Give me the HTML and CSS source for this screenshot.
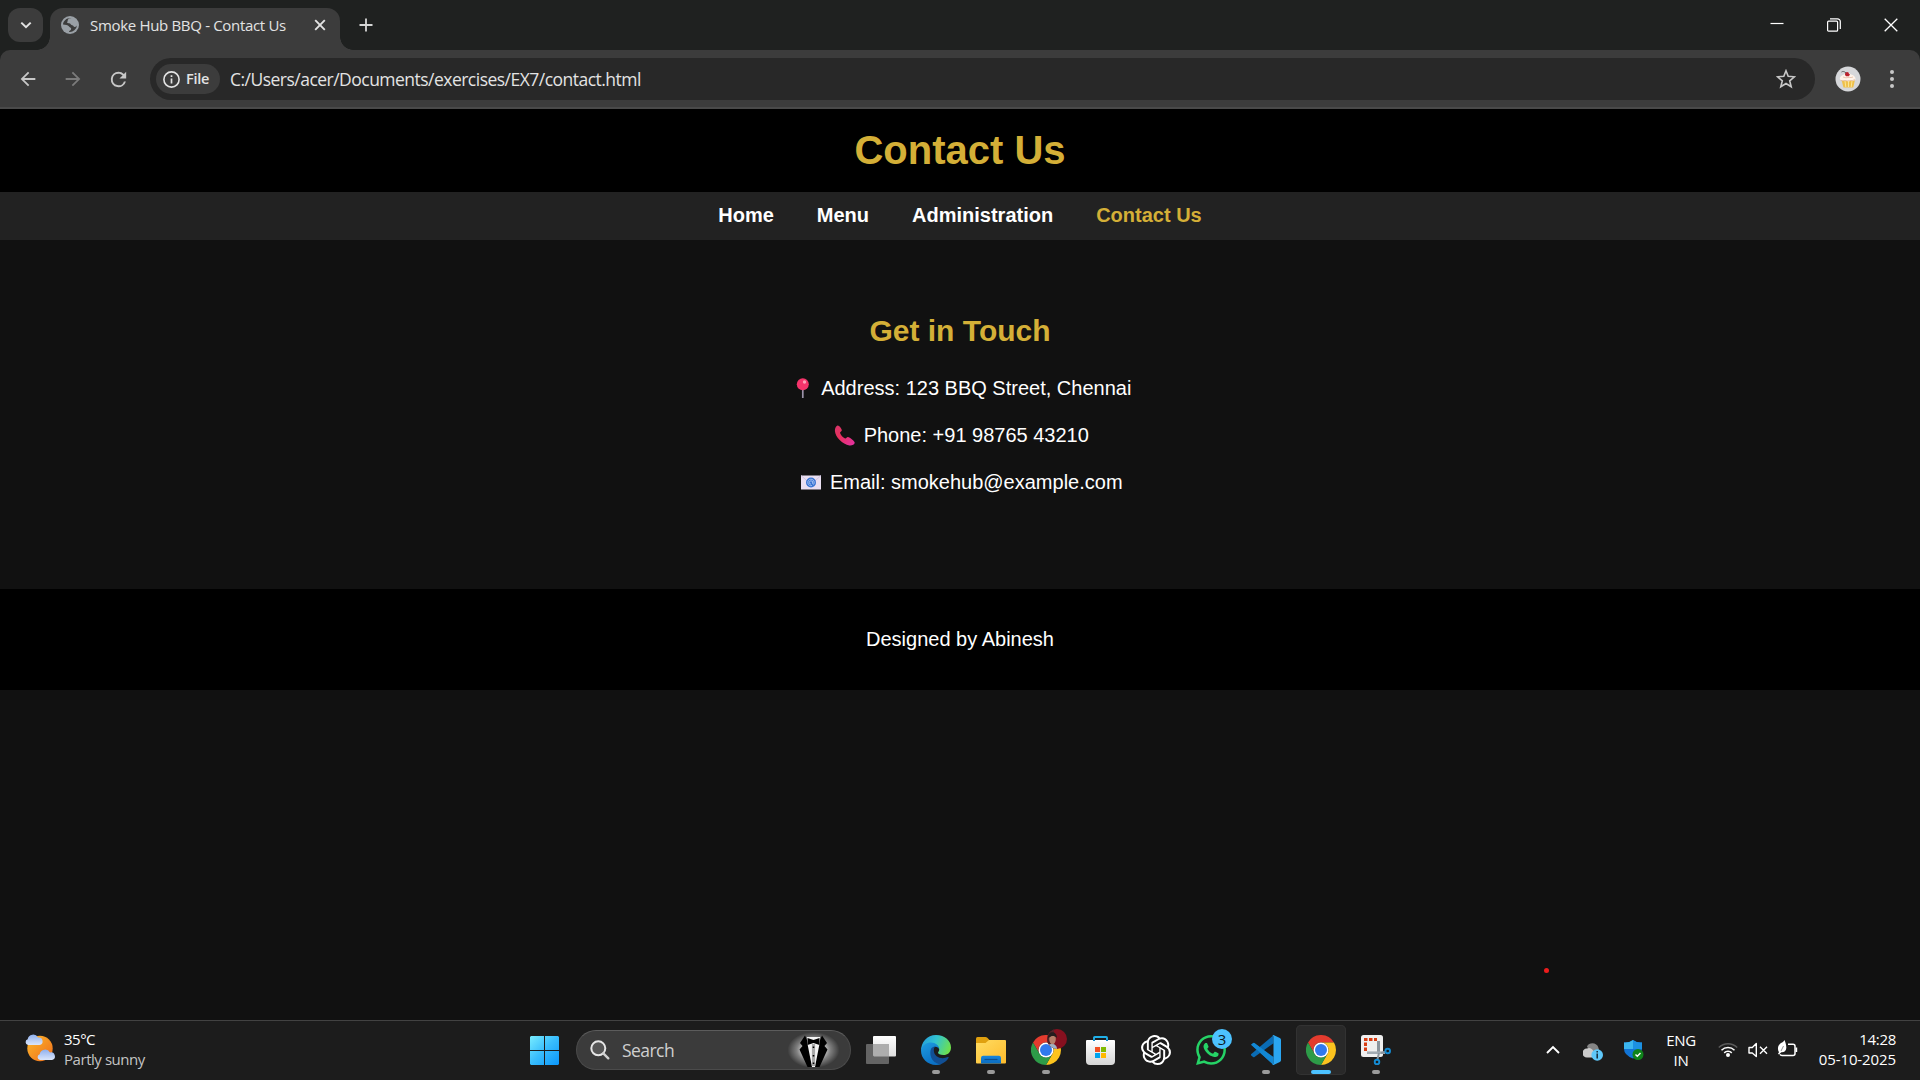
FILE: index.html
```html
<!DOCTYPE html>
<html lang="en">
<head>
<meta charset="utf-8">
<title>Smoke Hub BBQ - Contact Us</title>
<link rel="stylesheet" href="styles.css">
</head>
<body>
<div class="desktop">

  <div class="tabstrip">
    <div class="tab-search"><svg width="12" height="12" viewBox="0 0 12 12"><path d="M1.3 3.6 6 8.2l4.700-4.600" fill="none" stroke="#e3e3e3" stroke-width="2"/></svg></div>
    <div class="tab">
      <svg class="favicon" width="18" height="18" viewBox="0 0 18 18"><circle cx="9" cy="9" r="9" fill="#9aa0a6"/><path d="M10.500 2C7 2.300 6.500 4 6.800 5.200 5.500 5.500 6 7.500 8 7.300c2 0 1.500 1.800 3 2 1.800.2 1.400 1.700 2.800 1.700 1.200 0 1.500-.8 2.200-1.500A7.200 7.200 0 0 1 8 15.900c0-1.600 2.300-1.500 2.200-3.200-.1-1.500-1.700-1.300-2.400-2.500C7 9 4.500 8.900 2 8.600 2.200 4.500 6 1.500 10.500 2Z" fill="#3c3c3c"/></svg>
      <span class="tab-title">Smoke Hub BBQ - Contact Us</span>
      <svg class="tab-close" width="12" height="12" viewBox="0 0 12 12"><path d="m1.200 1.200 9.600 9.600m0-9.600-9.600 9.600" stroke="#e3e3e3" stroke-width="1.900"/></svg>
    </div>
    <svg class="new-tab" width="14" height="14" viewBox="0 0 14 14"><path d="M7 .5v13M.5 7h13" stroke="#d5d6d6" stroke-width="1.800"/></svg>
    <div class="window-buttons">
      <svg width="14" height="14" viewBox="0 0 14 14"><path d="M.5 5.500h13" stroke="#fff" stroke-width="1.200"/></svg>
      <svg width="14" height="14" viewBox="0 0 14 14"><rect x=".6" y="3.200" width="10" height="10" rx="1" fill="none" stroke="#fff" stroke-width="1.200"/><path d="M3 .8h7.500a2.800 2.800 0 0 1 2.800 2.800V11" fill="none" stroke="#fff" stroke-width="1.200"/></svg>
      <svg width="14" height="14" viewBox="0 0 14 14"><path d="m.7.7 12.600 12.600m0-12.600L.7 13.300" stroke="#fff" stroke-width="1.300"/></svg>
    </div>
  </div>

  <div class="toolbar-back"><div class="toolbar">
    <svg class="nav-icon" width="22" height="22" viewBox="0 0 24 24"><path d="M20 11H7.830l5.590-5.590L12 4l-8 8 8 8 1.410-1.410L7.830 13H20z" fill="#c7c7c7"/></svg>
    <svg class="nav-icon" width="22" height="22" viewBox="0 0 24 24"><path d="m12 4-1.410 1.410L16.170 11H4v2h12.170l-5.580 5.590L12 20l8-8z" fill="#7b7b7b"/></svg>
    <svg class="nav-icon" width="23" height="23" viewBox="0 0 24 24"><path d="M17.650 6.350A7.958 7.958 0 0 0 12 4a8 8 0 1 0 7.730 10h-2.080A6 6 0 1 1 12 6c1.660 0 3.140.690 4.220 1.780L13 11h7V4z" fill="#c7c7c7"/></svg>
    <div class="omnibox">
      <div class="chip">
        <svg width="17" height="17" viewBox="0 0 17 17"><circle cx="8.500" cy="8.500" r="7.600" fill="none" stroke="#e3e3e3" stroke-width="1.600"/><path d="M8.500 7.500v5M8.500 4.300v1.800" stroke="#e3e3e3" stroke-width="1.700"/></svg>
        <span class="chip-text">File</span>
      </div>
      <span class="url">C:/Users/acer/Documents/exercises/EX7/contact.html</span>
      <svg class="star" width="20" height="20" viewBox="0 0 20 20"><path d="m10 1.800 2.200 5.500 6.200.5-4.700 4 1.500 6-5.200-3.300-5.200 3.300 1.500-6-4.700-4 6.200-.5z" fill="none" stroke="#c7c7c7" stroke-width="1.600"/></svg>
    </div>
    <svg class="profile" width="26" height="26" viewBox="0 0 26 26"><circle cx="13" cy="13" r="12.500" fill="#d6d7da"/><path d="M6.500 14h13.500l-1.800 7.600H8.500z" fill="#efc04a"/><path d="m10 15 .8 6m2.700-6v6m3.500-6-.8 6" stroke="#fae596"/><path d="M5 13.500c-.8-2.500 2-4.500 4-5 2-1.500 6-1.500 7 0 3 .5 5 3 4.500 5-1.500 2-3 .8-4.500 1.300-2 .7-3 .7-4 .2-1.500-.7-5 .5-7-1.500" fill="#fff3ea"/><path d="M5.500 14.200q2 1.200 4.500.2 2 1 4.500.1 3 .5 5.500-.9M8 11q3 1.500 6 .3 2 .7 4-.3" fill="none" stroke="#dfb59a" stroke-width=".7"/><path d="M10 8h5l-1 2.200h-3z" fill="#c42b35"/><circle cx="12" cy="8" r="2" fill="#b9202c"/><path d="M11 7C9 5 7.500 5.300 6.500 6" fill="none" stroke="#5f6060" stroke-width="1"/></svg>
    <svg class="kebab" width="6" height="20" viewBox="0 0 6 20"><g fill="#c7c7c7"><circle cx="3" cy="3" r="2"/><circle cx="3" cy="10" r="2"/><circle cx="3" cy="17" r="2"/></g></svg>
  </div></div>

  <div class="page">
    <header class="site-header"><h1>Contact Us</h1></header>
    <nav class="site-nav"><a>Home</a><a>Menu</a><a>Administration</a><a class="active">Contact Us</a></nav>
    <main class="contact">
      <h2>Get in Touch</h2>
      <p><svg class="emoji" width="27" height="22" viewBox="0 0 27 22"><path d="M13.800 10v10" stroke="#9a92a8" stroke-width="1.700"/><circle cx="13.800" cy="6.300" r="6" fill="#f5346b"/><circle cx="15.500" cy="4" r="1.700" fill="#ffa0b8"/></svg><span>Address: 123 BBQ Street, Chennai</span></p>
      <p><svg class="emoji" width="27" height="22" viewBox="0 0 27 22"><defs><linearGradient id="phone" x1="0" y1="0" x2="1" y2="1"><stop offset="0" stop-color="#d5356b"/><stop offset=".4" stop-color="#e8305c"/><stop offset="1" stop-color="#e332a6"/></linearGradient></defs><path d="M6.500.6c1.500-.4 4.800 3.800 4.300 5-.4 1-1.900 1.300-1.700 2.400.5 2 2.900 4.700 5 5.500 1 .3 1.700-1.600 2.800-1.500 1.900.2 6.900 4.300 6.800 5.700-.2 2.100-3.100 3-5.300 2.700C11.500 19.500 4.300 12 3.900 6 3.800 3.500 4.900 1.100 6.500.6Z" fill="url(#phone)"/></svg><span>Phone: +91 98765 43210</span></p>
      <p><svg class="emoji" width="27" height="22" viewBox="0 0 27 22"><rect x="4" y="3.500" width="20" height="14" fill="#e9dff1"/><path d="m4 3.500 8 7m12-7-8 7" stroke="#d3c4e4"/><circle cx="14" cy="10.500" r="5" fill="#3b76d4"/><path d="M15.700 10.500a1.700 1.700 0 1 0-1.700 1.700m1.700-2.700v2c0 1.500 1.700.8 1.500-1a3.200 3.200 0 1 0-2.200 3" fill="none" stroke="#b5cdf5" stroke-width=".8"/></svg><span>Email: smokehub@example.com</span></p>
    </main>
    <footer class="site-footer">Designed by Abinesh</footer>
    <div class="pointer-dot"></div>
  </div>

  <div class="taskbar">
    <div class="weather">
      <svg width="30" height="30" viewBox="0 0 30 30"><defs><linearGradient id="sun" x1="0" y1="0" x2="1" y2="1"><stop offset="0" stop-color="#fcb92c"/><stop offset="1" stop-color="#ef6c1a"/></linearGradient><linearGradient id="cloud" x1="0" y1="0" x2="0" y2="1"><stop offset="0" stop-color="#8fb0ee"/><stop offset="1" stop-color="#dbe6fb"/></linearGradient></defs><circle cx="15" cy="15.500" r="12.700" fill="url(#sun)"/><path d="M3 12a3 3 0 0 1-.3-5.800A5.500 5.500 0 0 1 13 4.500 3.800 3.800 0 0 1 14.500 12Z" fill="url(#cloud)"/><path d="M15 27a3 3 0 0 1-.3-5.800A5.500 5.500 0 0 1 25 19.500a3.800 3.800 0 0 1 2 7.500Z" fill="url(#cloud)"/></svg>
      <div class="weather-text"><div class="temp">35°C</div><div class="cond">Partly sunny</div></div>
    </div>

    <div class="apps">
      <div class="app"><svg width="30" height="30" viewBox="0 0 30 30"><defs><linearGradient id="win" gradientUnits="userSpaceOnUse" x1="0" y1="0" x2="30" y2="30"><stop offset="0" stop-color="#7df0ff"/><stop offset=".5" stop-color="#39bdfc"/><stop offset="1" stop-color="#0a96fb"/></linearGradient></defs><path d="M2 1H15v14H1V2zM16 1h13l1 1v13H16zM1 16h14v14H2l-1-1zM16 16h14v13l-1 1H16z" fill="url(#win)"/></svg></div>
      <div class="search">
        <svg width="20" height="20" viewBox="0 0 20 20"><circle cx="8.300" cy="8.300" r="7" fill="#565656" stroke="#e6e6e6" stroke-width="2"/><path d="m13.300 13.300 5 5" stroke="#d0d0d0" stroke-width="2.400" stroke-linecap="round"/></svg>
        <span class="search-text">Search</span>
        <svg class="tuxedo" width="60" height="38" viewBox="0 0 60 38"><defs><radialGradient id="glow"><stop offset=".3" stop-color="#fff" stop-opacity=".9"/><stop offset=".65" stop-color="#fff" stop-opacity=".35"/><stop offset="1" stop-color="#fff" stop-opacity="0"/></radialGradient></defs><ellipse cx="30.500" cy="19" rx="26" ry="18" fill="url(#glow)"/><path d="M24 6h13l-1 30H25z" fill="#f4f4f4"/><path d="M22 4.500 17 12l2.500 3-3 3.500L24.500 36H29L24.700 14l-.7-5zM39 4.500l5 7.500-2.500 3 3 3.500L36.500 36H32l4.300-22 .7-5z" fill="#000"/><path d="m24.500 7 6 2 6-2v7l-6-2-6 2z" fill="#000"/><path d="M30.500 13v22" stroke="#a8a8a8" stroke-width="3.200"/><path d="M30.500 15.500v1.500m0 7v1.500m0 6V33" stroke="#000" stroke-width="1.600"/></svg>
      </div>
      <div class="app"><svg width="30" height="30" viewBox="0 0 30 30"><defs><linearGradient id="tv" x1="0" y1="0" x2="0" y2="1"><stop offset="0" stop-color="#fff"/><stop offset="1" stop-color="#dedede"/></linearGradient></defs><rect x="7" y="1" width="23" height="20.500" rx="1" fill="url(#tv)"/><rect x="0" y="9" width="23" height="20" rx="1" fill="#646464"/><path d="M7 9h16v12.500H8l-1-1z" fill="#adadad"/></svg></div>
      <div class="app running"><svg width="30" height="30" viewBox="0 0 30 30"><defs><linearGradient id="eg" x1="0" y1=".3" x2="1" y2=".6"><stop offset="0" stop-color="#249ddd"/><stop offset=".45" stop-color="#32c4cf"/><stop offset="1" stop-color="#6fe04a"/></linearGradient><linearGradient id="eb" x1="0" y1="0" x2=".5" y2="1"><stop offset="0" stop-color="#1e9ce0"/><stop offset="1" stop-color="#0b70c4"/></linearGradient></defs><path d="M0 16C0 7 6 0 15 0c9 0 15 6 15 12.500 0 5-3.500 7.500-7.500 7.500-3.500 0-5.500-1.200-5.500-2.300 0-.8 1.200-1.200 1.200-3.200 0-3-3-5.500-7-5.500C6 9 2 11.500 0 16Z" fill="url(#eg)"/><path d="M0 15.500C1 10 5.500 7.500 10 7.500c4.500 0 8.200 3 8.200 6.800-.6-1.800-2.300-2.800-4.200-2.600-3 .5-4.500 4-3.500 8 1.200 5 6 9 10.500 9A15 15 0 0 1 15 30C6.500 30 0 23.500 0 15.500Z" fill="url(#eb)"/><path d="M10.200 13.500C8 18 9.500 27.500 19 29.400c4-1 7-3.500 8.600-6.600.3-.6-.2-1-.8-.7-5.300 2.500-14 .8-14-7.100 0-1 .4-2.300 1.200-3.200-1.700 0-3 .5-3.800 1.700Z" fill="#114f94"/></svg></div>
      <div class="app running"><svg width="30" height="30" viewBox="0 0 30 30"><defs><linearGradient id="fo" x1="0" y1="0" x2="1" y2="1"><stop offset="0" stop-color="#ffdc62"/><stop offset="1" stop-color="#fdbb2c"/></linearGradient><linearGradient id="fb" x1="0" y1="0" x2="0" y2="1"><stop offset="0" stop-color="#1585dd"/><stop offset="1" stop-color="#0b6cc0"/></linearGradient></defs><path d="M0 3.500Q0 2 1.500 2h8q1 0 1.800.8L14 5.500V9H0z" fill="#e0a00f"/><path d="M0 8h9.500l3.500-3h16q1 0 1 1v21.500q0 1-1 1H1q-1 0-1-1z" fill="url(#fo)"/><path d="M5 28.500V23q0-2.200 2.200-2.200h15.600q2.200 0 2.200 2.200v5.500z" fill="url(#fb)"/><path d="M8.500 24.500h13" stroke="#0b4f91" stroke-width="1.200"/></svg></div>
      <div class="app running"><svg width="30" height="30" viewBox="0 0 48 48"><path d="M24 12h20.780A24 24 0 0 0 3.200 12l10.400 18A12 12 0 0 1 24 12" fill="#e33b2e"/><path d="M34.400 30 24 48a24 24 0 0 0 20.780-36H24a12 12 0 0 1 10.400 18" fill="#fcc31e"/><path d="M13.600 30 3.200 12A24 24 0 0 0 24 48l10.400-18a12 12 0 0 1-20.800 0" fill="#2d9b48"/><circle cx="24" cy="24" r="12" fill="#fff"/><circle cx="24" cy="24" r="9.600" fill="#3079ee"/></svg>
        <svg class="avatar" width="20" height="20" viewBox="0 0 20 20"><defs><clipPath id="av"><circle cx="10" cy="10" r="10"/></clipPath></defs><g clip-path="url(#av)"><rect width="20" height="20" fill="#86101f"/><path d="M0 0h7v20H0z" fill="#53242a"/><path d="M0 20c0-4 2-5 5-5s5 2 5 5z" fill="#9fb0c0"/><ellipse cx="5.500" cy="10" rx="3.300" ry="5.300" fill="#b5806a"/><path d="M1 9c0-8 9-7 9 0-2-2-5-2.500-6-1.500z" fill="#241c1d"/></g></svg></div>
      <div class="app"><svg width="30" height="30" viewBox="0 0 30 30"><defs><linearGradient id="st" x1="0" y1="0" x2="0" y2="1"><stop offset="0" stop-color="#fff"/><stop offset="1" stop-color="#d5d5d5"/></linearGradient></defs><path d="M8 6.500V2.800Q8 2 8.800 2h11.400q.8 0 .8.800v3.700" fill="none" stroke="#20b0e8" stroke-width="1.900"/><path d="M0 6Q0 5 1 5h27q1 0 1 1v20q0 4-4 4H4q-4 0-4-4z" fill="url(#st)"/><path d="M8 4.500V6m13-1.500V6" stroke="#1489c8" stroke-width="2"/><path d="M9 12h5v5H9z" fill="#f25022"/><path d="M15 12h5v5h-5z" fill="#7fba00"/><path d="M9 18h5v5H9z" fill="#00a4ef"/><path d="M15 18h5v5h-5z" fill="#ffb900"/></svg></div>
      <div class="app"><svg width="30" height="30" viewBox="0 0 24 24"><path fill="#fff" d="M22.282 9.821a5.985 5.985 0 0 0-.516-4.911 6.046 6.046 0 0 0-6.510-2.900A6.065 6.065 0 0 0 4.981 4.182a5.985 5.985 0 0 0-3.998 2.900 6.046 6.046 0 0 0 .743 7.097 5.980 5.980 0 0 0 .511 4.911 6.051 6.051 0 0 0 6.515 2.900A5.985 5.985 0 0 0 13.260 24a6.056 6.056 0 0 0 5.772-4.206 5.989 5.989 0 0 0 3.998-2.900 6.056 6.056 0 0 0-.748-7.073zM13.260 22.430a4.476 4.476 0 0 1-2.876-1.041l.142-.080 4.778-2.758a.795.795 0 0 0 .393-.681v-6.737l2.020 1.169a.071.071 0 0 1 .038.052v5.583a4.504 4.504 0 0 1-4.495 4.494zM3.599 18.304a4.471 4.471 0 0 1-.535-3.014l.142.085 4.783 2.758a.771.771 0 0 0 .781 0l5.843-3.369v2.332a.080.080 0 0 1-.033.062L9.740 19.950a4.499 4.499 0 0 1-6.141-1.646zM2.341 7.896a4.485 4.485 0 0 1 2.366-1.973V11.600a.766.766 0 0 0 .388.677l5.814 3.354-2.020 1.169a.076.076 0 0 1-.071 0l-4.830-2.787A4.504 4.504 0 0 1 2.341 7.872zm16.596 3.856L13.104 8.364 15.119 7.200a.076.076 0 0 1 .071 0l4.830 2.791a4.494 4.494 0 0 1-.677 8.104v-5.677a.790.790 0 0 0-.407-.667zm2.011-3.023l-.142-.085-4.774-2.782a.776.776 0 0 0-.785 0L9.409 9.230V6.897a.066.066 0 0 1 .028-.062l4.830-2.787a4.499 4.499 0 0 1 6.680 4.660zM8.307 12.863l-2.020-1.164a.080.080 0 0 1-.038-.057V6.074a4.499 4.499 0 0 1 7.376-3.454l-.142.081L8.704 5.459a.795.795 0 0 0-.393.681zm1.098-2.365l2.602-1.500 2.607 1.500v2.999l-2.597 1.500-2.607-1.500Z"/></svg></div>
      <div class="app"><svg width="30" height="30" viewBox="0 0 24 24"><path fill="#25d366" d="M17.472 14.382c-.297-.149-1.758-.867-2.030-.967-.273-.099-.471-.148-.670.150-.197.297-.767.966-.940 1.164-.173.199-.347.223-.644.075-.297-.150-1.255-.463-2.390-1.475-.883-.788-1.480-1.761-1.653-2.059-.173-.297-.018-.458.130-.606.134-.133.298-.347.446-.520.149-.174.198-.298.298-.497.099-.198.050-.371-.025-.520-.075-.149-.669-1.612-.916-2.207-.242-.579-.487-.500-.669-.510-.173-.008-.371-.010-.570-.010-.198 0-.520.074-.792.372-.272.297-1.040 1.016-1.040 2.479 0 1.462 1.065 2.875 1.213 3.074.149.198 2.096 3.200 5.077 4.487.709.306 1.262.489 1.694.625.712.227 1.360.195 1.871.118.571-.085 1.758-.719 2.006-1.413.248-.694.248-1.289.173-1.413-.074-.124-.272-.198-.570-.347m-5.421 7.403h-.004a9.870 9.870 0 0 1-5.031-1.378l-.361-.214-3.741.982.998-3.648-.235-.374a9.860 9.860 0 0 1-1.510-5.260c.001-5.450 4.436-9.884 9.888-9.884 2.640 0 5.122 1.030 6.988 2.898a9.825 9.825 0 0 1 2.893 6.994c-.003 5.450-4.437 9.884-9.885 9.884m8.413-18.297A11.815 11.815 0 0 0 12.050 0C5.495 0 .160 5.335.157 11.892c0 2.096.547 4.142 1.588 5.945L.057 24l6.305-1.654a11.882 11.882 0 0 0 5.683 1.448h.005c6.554 0 11.890-5.335 11.893-11.893a11.821 11.821 0 0 0-3.480-8.413Z"/></svg><span class="badge">3</span></div>
      <div class="app running"><svg width="30" height="30" viewBox="0 0 30 30"><path d="M0 9.800 2 8.400q.8-.5 1.500 0L22 22.500v7z" fill="#1484cf"/><path d="M22.500.2v8L3.500 22q-.7.500-1.400 0L.3 20.500q-.8-.8 0-1.500z" fill="#0a6cb5"/><path d="m.3 9.500 1.800-1.600q.7-.5 1.400 0L22.500 22v7.800z" fill="#1287d3"/><path d="m22.500 0 6.300 3q1.200.6 1.200 1.800v20.400q0 1.200-1.200 1.800l-6.300 3q-.8 0-1.500-.7.900.3 1.500-.8v-27Q22 .3 21 .7q.7-.7 1.500-.7Z" fill="#2aa6f2"/></svg></div>
      <div class="app active-app running"><svg width="30" height="30" viewBox="0 0 48 48"><path d="M24 12h20.780A24 24 0 0 0 3.200 12l10.400 18A12 12 0 0 1 24 12" fill="#e33b2e"/><path d="M34.400 30 24 48a24 24 0 0 0 20.780-36H24a12 12 0 0 1 10.400 18" fill="#fcc31e"/><path d="M13.600 30 3.200 12A24 24 0 0 0 24 48l10.400-18a12 12 0 0 1-20.800 0" fill="#2d9b48"/><circle cx="24" cy="24" r="12" fill="#fff"/><circle cx="24" cy="24" r="9.600" fill="#3079ee"/></svg></div>
      <div class="app running"><svg width="30" height="30" viewBox="0 0 30 30"><rect width="22" height="22" rx="2.500" fill="#efefef"/><path d="M4.500 16V4.500H16" fill="none" stroke="#d83b10" stroke-width="3" stroke-dasharray="3.500 1.500"/><path d="M17.500 6v13" stroke="#8b949c" stroke-width="3"/><path d="M6 17.700h18" stroke="#a3abb2" stroke-width="2.600"/><path d="m18 18-1.500 6M20 18l4-1" stroke="#8b949c" stroke-width="2"/><circle cx="16" cy="27" r="2.300" fill="none" stroke="#148cd4" stroke-width="1.900"/><circle cx="26.700" cy="16" r="2.300" fill="none" stroke="#148cd4" stroke-width="1.900"/></svg></div>
    </div>

    <div class="tray">
      <svg class="t-chevron" width="14" height="10" viewBox="0 0 14 10"><path d="m1 8 6-6 6 6" fill="none" stroke="#fff" stroke-width="1.900"/></svg>
      <svg class="t-cloud" width="20" height="20" viewBox="0 0 20 20"><path d="M4 5.500C6 1 14 1 15.500 7l1.500 5-9 1z" fill="#858585"/><path d="M4 16.500a4.500 4.500 0 0 1-.2-9C8 5.500 10 9 11 11l3 5.500z" fill="#cbcbcb"/><circle cx="14.200" cy="14" r="5.800" fill="#5fc8fa"/><path d="M14.200 12.500v5M14.200 10v1.500" stroke="#162c3a" stroke-width="1.500"/></svg>
      <svg class="t-shield" width="20" height="20" viewBox="0 0 20 20"><path d="M9 0q4 3 9 2.500V9q0 6-9 9.500Q0 15 0 9V2.500Q5 3 9 0Z" fill="#1274d5"/><path d="M9 0v9H0V2.500Q5 3 9 0Z" fill="#3bb6ef"/><path d="M9 0v9h9V2.500Q13 3 9 0Z" fill="#1c91e2"/><circle cx="14" cy="14.500" r="5.500" fill="#0f831a"/><path d="m11.500 14.500 1.800 1.800 3.200-3.300" fill="none" stroke="#fff" stroke-width="1.400"/></svg>
      <div class="lang"><div>ENG</div><div>IN</div></div>
      <svg class="t-wifi" width="20" height="16" viewBox="0 0 20 16"><g fill="none" stroke-width="1.500"><path d="M.8 5.500a13 13 0 0 1 18.400 0" stroke="#5b5b5b"/><path d="M3.500 8.200a9.200 9.200 0 0 1 13 0M6.200 10.900a5.400 5.400 0 0 1 7.600 0" stroke="#fff"/></g><circle cx="10" cy="13" r="2" fill="#fff"/></svg>
      <svg class="t-volume" width="20" height="16" viewBox="0 0 20 16"><path d="M1 5.500h3.300L8.300 1.500v13l-4-3.500H1z" fill="none" stroke="#fff" stroke-width="1.400" stroke-linejoin="round"/><path d="m12 4.700 7 7m0-7-7 7" stroke="#fff" stroke-width="1.400"/></svg>
      <svg class="t-battery" width="21" height="18" viewBox="0 0 21 18"><path d="M11 4.200h5q2 0 2 2v7.200q0 2-2 2H5q-1.500 0-2-1" fill="none" stroke="#fff" stroke-width="1.500"/><path d="M18.500 7.500h1.700V12h-1.700z" fill="#fff"/><path d="M7.500 0C8 1.500 9.500 4.500 9.300 8c0 3-2.500 4.500-5 4.200L2 14.500l-1-.8 1-1.500C-.5 8 2 4 4.500 2.800 6 2 7 1.300 7.500 0Z" fill="#fff"/><path d="M6.500 6 4 11" stroke="#777" stroke-width=".8"/></svg>
      <div class="clock"><div class="time">14:28</div><div class="date">05-10-2025</div></div>
    </div>
  </div>
</div>
</body>
</html>
```
FILE: styles.css
```css
* { box-sizing: border-box; }
body { margin: 0; background: #111; }
svg { display: block; flex: none; }

.desktop {
  display: flex;
  flex-direction: column;
  width: 1920px;
  height: 1080px;
  overflow: hidden;
  font-family: "Open Sans", "Noto Sans", sans-serif;
  white-space: nowrap;
}

/* Browser tab strip */
.tabstrip {
  display: flex;
  align-items: flex-start;
  flex: none;
  height: 50px;
  padding: 8px 0 0 8px;
  background: #1f2120;
}
.tab-search {
  display: grid;
  place-items: center;
  width: 35px;
  height: 34px;
  border-radius: 12px;
  background: #3c3c3c;
}
.tab {
  position: relative;
  display: flex;
  align-items: center;
  width: 290px;
  height: 42px;
  margin-left: 7px;
  padding: 0 14px 8px 11px;
  border-radius: 13px 13px 0 0;
  background: #3c3c3c;
}
.tab::before, .tab::after {
  content: "";
  position: absolute;
  bottom: 0;
  width: 13px;
  height: 13px;
}
.tab::before { left: -13px; background: radial-gradient(circle at 0 0, transparent 12.5px, #3c3c3c 13px); }
.tab::after { right: -13px; background: radial-gradient(circle at 100% 0, transparent 12.5px, #3c3c3c 13px); }
.tab-title { flex: 1; margin: 0 0 1px 11px; font-size: 15px; line-height: 20px; letter-spacing: -0.32px; color: #e3e3e3; }
.new-tab { margin: 10px 0 0 19px; }
.window-buttons { display: flex; gap: 43px; margin: 10px 22px 0 auto; }

/* Browser toolbar */
.toolbar-back { flex: none; background: #1f2120; }
.toolbar {
  display: flex;
  align-items: center;
  height: 59px;
  padding: 1px 25px 0 16.5px;
  border-bottom: 2px solid #4a4a4a;
  border-radius: 10px 10px 0 0;
  background: #3c3c3c;
}
.nav-icon { margin-right: 23px; }
.omnibox {
  display: flex;
  align-items: center;
  width: 1665px;
  height: 42px;
  margin-left: -2.5px;
  padding: 0 19px 0 6px;
  border-radius: 21px;
  background: #282828;
}
.chip {
  display: flex;
  align-items: center;
  gap: 6px;
  width: 64px;
  height: 30px;
  padding-left: 7px;
  border-radius: 15px;
  background: #3c3c3c;
}
.chip-text { margin-bottom: 1px; font-size: 14.5px; font-weight: 600; color: #e3e3e3; letter-spacing: -0.3px; }
.url { margin: 0 0 1px 10px; font-size: 17.5px; color: #e3e3e3; letter-spacing: -0.52px; }
.star { margin-left: auto; }
.profile { margin-left: 20px; }
.kebab { margin-left: auto; }

/* Contact page */
.page {
  position: relative;
  flex: 1;
  min-height: 0;
  background: #111;
  color: #fff;
  font: 20px/23px "Liberation Sans", Arial, sans-serif;
  text-align: center;
}
.site-header { height: 83px; padding-top: 18px; background: #000; }
.site-header h1 { margin: 0; font-size: 40px; line-height: 46px; color: #d4af37; }
.site-nav {
  display: flex;
  justify-content: center;
  gap: 43px;
  height: 48px;
  padding-top: 12px;
  background: #222;
  font-weight: bold;
}
.site-nav .active { color: #d4af37; }
.contact { height: 349px; padding-top: 73px; }
.contact h2 { margin: 0 0 27px; font-size: 30px; line-height: 35px; color: #d4af37; }
.contact p { display: flex; justify-content: center; align-items: center; gap: 5.5px; height: 27px; margin: 0 0 20px; }
.site-footer { height: 101px; padding-top: 39px; background: #000; }
.pointer-dot {
  position: absolute;
  left: 1544px;
  top: 858.5px;
  width: 5px;
  height: 5px;
  border-radius: 50%;
  background: #ed1c1c;
}

/* Taskbar */
.taskbar {
  display: flex;
  flex: none;
  height: 60px;
  border-top: 1px solid #424242;
  background: #1c1c1c;
  color: #fff;
  font-size: 15px;
  line-height: 20px;
}
.weather { display: flex; width: 519px; padding: 12px 0 0 25px; }
.weather-text { margin: -4px 0 0 9px; }
.temp { letter-spacing: -0.5px; }
.cond { color: #c4c4c4; letter-spacing: -0.45px; }
.apps { display: flex; gap: 5px; padding-top: 4px; }
.app {
  position: relative;
  display: grid;
  place-items: center;
  width: 50px;
  height: 50px;
  border-radius: 5px;
}
.running::after {
  content: "";
  position: absolute;
  left: 21px;
  top: 45px;
  width: 8px;
  height: 4px;
  border-radius: 2px;
  background: #9a9a9a;
}
.active-app { background: #292929; box-shadow: inset 0 0 0 1px #323232; }
.active-app::after { left: 15px; width: 20px; background: #4cc2ff; }
.avatar { position: absolute; left: 26px; top: 4px; }
.badge {
  position: absolute;
  left: 26px;
  top: 4px;
  width: 20px;
  height: 20px;
  border-radius: 50%;
  background: #4cc2ff;
  color: #0c1a24;
  font-size: 15px;
  text-align: center;
}
.search {
  display: flex;
  align-items: center;
  width: 275px;
  height: 40px;
  margin: 5px 0 0 2px;
  padding: 0 7px 0 13px;
  border: 1px solid #4b4b4b;
  border-top-color: #5c5c5c;
  border-radius: 20px;
  background: #3b3b3b;
}
.search-text { margin: 0 0 0 12px; font-size: 17.5px; color: #cfcfcf; letter-spacing: -0.55px; }
.tuxedo { margin-left: auto; }
.tray { display: flex; align-items: center; flex: 1; }
.t-chevron { margin-left: 145px; margin-bottom: 1px; }
.t-cloud { margin-left: 23px; }
.t-shield { margin-left: 21px; margin-bottom: 1px; }
.lang { width: 40px; margin: -2px 0 0 17px; text-align: center; letter-spacing: -0.3px; }
.t-wifi { margin-left: 17px; margin-bottom: 1px; }
.t-volume { margin-left: 10px; margin-bottom: 1px; }
.t-battery { margin-left: 9px; margin-bottom: 3px; }
.clock { margin: -4px 24px 0 auto; text-align: right; letter-spacing: -0.1px; }
.time { letter-spacing: -0.3px; }
```
